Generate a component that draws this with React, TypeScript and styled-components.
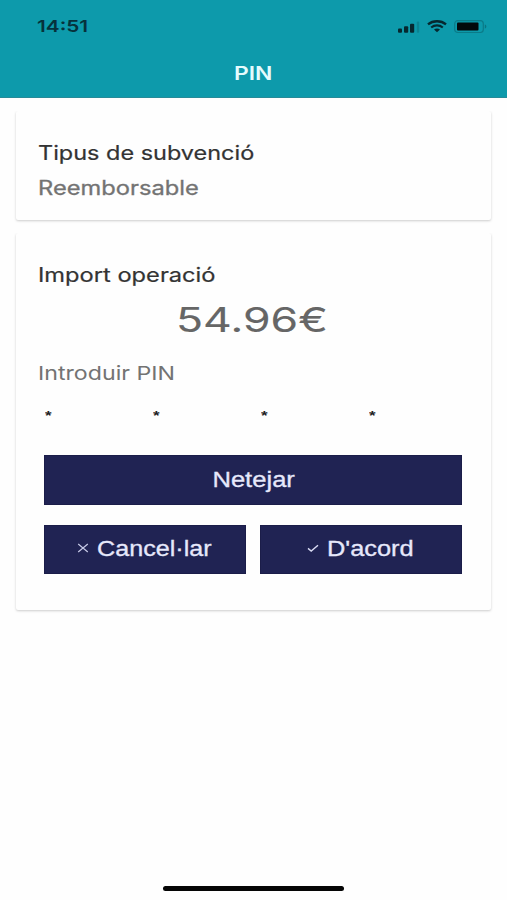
import React from "react";
import styled, { createGlobalStyle } from "styled-components";

const Global = createGlobalStyle`
  body { margin: 0; background: #fefefe; }
  * { box-sizing: border-box; }
`;

const Screen = styled.div`
  display: flex;
  flex-direction: column;
  height: 900px;
  font-family: Inter, "Liberation Sans", sans-serif;
  background: #fefefe;
`;

const Header = styled.header`
  height: 98px;
  flex: none;
  background: #0d9aab;
  border-bottom: 1px solid #278b98;
`;

const StatusBar = styled.div`
  display: flex;
  align-items: center;
  justify-content: space-between;
  height: 52px;
  padding: 0 20px 0 36.5px;
`;

/* Extended-width lettering used throughout the app. */
const Wide = styled.span<{ $stretch: number; $center?: boolean }>`
  display: inline-block;
  white-space: nowrap;
  transform: scaleX(${(p) => p.$stretch});
  transform-origin: ${(p) => (p.$center ? "center" : "left")};
`;

const Clock = styled.time`
  font-size: 16.5px;
  font-weight: 600;
  color: #06323b;
`;

const StatusIcons = styled.div`
  display: flex;
  align-items: center;
  gap: 7px;
  padding-top: 1px;
  svg { display: block; }
`;

const Title = styled.h1`
  margin: 0;
  height: 44px;
  line-height: 44px;
  text-align: center;
  font-size: 18px;
  font-weight: 600;
  color: #e4fbfd;
`;

const Content = styled.main`
  display: flex;
  flex-direction: column;
  gap: 13px;
  padding: 13px 16px 0;
  flex: 1;
`;

const Card = styled.section<{ $height: number }>`
  height: ${(p) => p.$height}px;
  padding: 24px 22px 0;
  background: #fefefe;
  border-radius: 2px;
  box-shadow: 0 1px 2.5px rgba(0, 0, 0, 0.2);
  clip-path: inset(0 -4px -4px -4px);
`;

const Label = styled.h2`
  margin: 0;
  font-size: 20px;
  line-height: 36px;
  font-weight: 400;
  color: #333;
  -webkit-text-stroke: 0.2px #333;
`;

const Value = styled.p`
  margin: 0;
  font-size: 19.5px;
  line-height: 35px;
  color: #737373;
  -webkit-text-stroke: 0.3px #737373;
`;

const Amount = styled.p`
  margin: 0 0 9px;
  padding-right: 3px;
  font-size: 34px;
  line-height: 53px;
  text-align: center;
  color: #666;
  -webkit-text-stroke: 0.1px #666;
`;

const Hint = styled.p`
  margin: 0;
  font-size: 19px;
  line-height: 37px;
  color: #737373;
`;

const PinRow = styled.div`
  display: grid;
  grid-template-columns: repeat(4, 108px);
  height: 43px;
  padding-left: 7px;
`;

const PinDigit = styled.span`
  font: 700 13px/47px "Liberation Sans", sans-serif;
  color: #222;
`;

const Actions = styled.div`
  display: grid;
  grid-template-columns: 1fr 1fr;
  column-gap: 14px;
  row-gap: 20px;
  width: 418px;
  margin: 20px 0 0 6.4px;
`;

const Button = styled.button<{ $full?: boolean }>`
  grid-column: ${(p) => (p.$full ? "1 / -1" : "auto")};
  display: flex;
  align-items: center;
  justify-content: center;
  height: 49.5px;
  padding: ${(p) => (p.$full ? "1px 0 0" : "0")};
  border: 1px solid #1b1d49;
  border-radius: 0;
  background: #202353;
  color: #e6e8fb;
  font: 400 21.5px "Liberation Sans", sans-serif;
  -webkit-text-stroke: 0.3px #e6e8fb;
`;

const IconLabel = styled.span<{ $width: number }>`
  display: flex;
  align-items: center;
  width: ${(p) => p.$width}px;
  gap: 8px;
  svg { flex: none; }
`;

const HomeIndicator = styled.div`
  width: 181px;
  height: 5.5px;
  margin: 0 auto 9px;
  border-radius: 3px;
  background: #050505;
`;

const Signal = () => (
  <svg width="22" height="12" viewBox="0 0 22 12">
    <g fill="#06282f">
      <rect x="0" y="7.5" width="4" height="4.2" rx="1" />
      <rect x="6" y="5.3" width="4.2" height="6.4" rx="1" />
      <rect x="12" y="2.8" width="4.2" height="8.9" rx="1" />
    </g>
    <rect x="18.8" y="0.6" width="2.4" height="11.1" rx="1" fill="#0b8492" />
  </svg>
);

const Wifi = () => (
  <svg width="20" height="13" viewBox="0 0 20 13" fill="none" stroke="#06282f">
    <path d="M1 4.4C6 0.2 14 0.2 19 4.4" strokeWidth="2.4" />
    <path d="M4.2 7.5C7.5 4.7 12.5 4.7 15.8 7.5" strokeWidth="2.1" />
    <path d="M7 9.6C8.8 8.2 11.2 8.2 13 9.6L10 12.2Z" fill="#06282f" stroke="none" />
  </svg>
);

const Battery = () => (
  <svg width="33" height="14" viewBox="0 0 33 14">
    <rect x="0.7" y="0.7" width="28.6" height="11.8" rx="3" fill="none" stroke="#0b7b88" strokeWidth="1.2" />
    <rect x="3" y="2.6" width="21.5" height="8" rx="1" fill="#02090b" />
    <path d="M30.8 4.6c2 .6 2 3.4 0 4z" fill="#0b7381" />
  </svg>
);

const Cross = () => (
  <svg width="12" height="12" viewBox="0 0 12 12" fill="none" stroke="#c6c9e6" strokeWidth="1.2">
    <path d="M1.2 1L10.8 9M10.8 1L1.2 9" />
  </svg>
);

const Check = () => (
  <svg width="12" height="12" viewBox="0 0 12 12" fill="none" stroke="#d9dbf3" strokeWidth="1.4">
    <path d="M1 5.4L4.2 8L11 2.2" />
  </svg>
);

export default function App() {
  return (
    <Screen>
      <Global />
      <Header>
        <StatusBar>
          <Clock><Wide $stretch={1.26}>14:51</Wide></Clock>
          <StatusIcons><Signal /><Wifi /><Battery /></StatusIcons>
        </StatusBar>
        <Title><Wide $stretch={1.27} $center>PIN</Wide></Title>
      </Header>
      <Content>
        <Card $height={109}>
          <Label><Wide $stretch={1.173}>Tipus de subvenció</Wide></Label>
          <Value><Wide $stretch={1.215}>Reemborsable</Wide></Value>
        </Card>
        <Card $height={377}>
          <Label><Wide $stretch={1.183}>Import operació</Wide></Label>
          <Amount><Wide $stretch={1.31} $center>54.96€</Wide></Amount>
          <Hint><Wide $stretch={1.22}>Introduir PIN</Wide></Hint>
          <PinRow>
            {[0, 1, 2, 3].map((i) => (
              <PinDigit key={i}><Wide $stretch={1.3}>*</Wide></PinDigit>
            ))}
          </PinRow>
          <Actions>
            <Button $full><Wide $stretch={1.19} $center>Netejar</Wide></Button>
            <Button>
              <IconLabel $width={136}><Cross /><Wide $stretch={1.17}>Cancel·lar</Wide></IconLabel>
            </Button>
            <Button>
              <IconLabel $width={109}><Check /><Wide $stretch={1.18}>D'acord</Wide></IconLabel>
            </Button>
          </Actions>
        </Card>
      </Content>
      <HomeIndicator />
    </Screen>
  );
}
